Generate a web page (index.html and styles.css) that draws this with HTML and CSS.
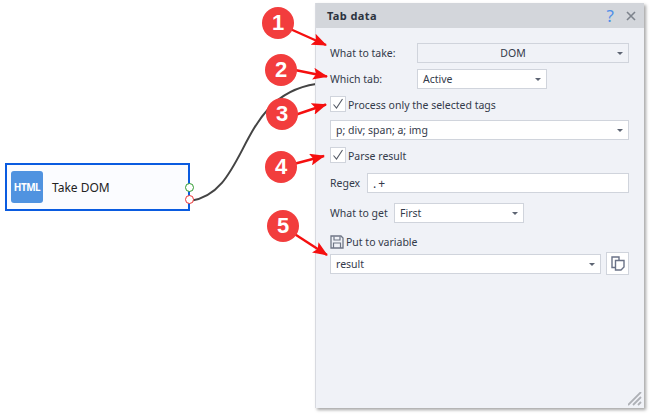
FILE: index.html
```html
<!DOCTYPE html>
<html lang="en">
<head>
<meta charset="utf-8">
<title>Tab data</title>
<link rel="stylesheet" href="styles.css">
</head>
<body>
<main class="canvas">
  <svg class="wire" width="652" height="416" viewBox="0 0 652 416" aria-hidden="true">
    <path d="M190 201C250 192 236 96 316 84" fill="none" stroke="#444" stroke-width="2"/>
  </svg>

  <div class="node">
    <span class="node-icon">HTML</span>
    <span class="node-label">Take DOM</span>
    <span class="port port-ok"></span>
    <span class="port port-err"></span>
  </div>

  <section class="panel">
    <header class="panel-head">
      <h1 class="panel-title">Tab data</h1>
      <span class="help">?</span>
      <svg class="close" width="10" height="10" viewBox="0 0 10 10" aria-hidden="true"><path d="M1 1l8 8M9 1l-8 8" stroke="#7d838c" stroke-width="1.6"/></svg>
    </header>
    <div class="panel-body">
      <div class="row row-take">
        <label class="lbl lbl-wide">What to take:</label>
        <div class="field field-disabled field-center grow"><span class="value">DOM</span><i class="caret"></i></div>
      </div>
      <div class="row row-tab">
        <label class="lbl lbl-wide">Which tab:</label>
        <div class="field w130"><span class="value">Active</span><i class="caret"></i></div>
      </div>
      <div class="row row-check1">
        <span class="check"><svg width="12" height="12" viewBox="0 0 12 12" aria-hidden="true"><path d="M1.5 6.5l3 3.5 6-9" fill="none" stroke="#555b66" stroke-width="1.1"/></svg></span>
        <span class="lbl lbl-check">Process only the selected tags</span>
      </div>
      <div class="row row-tags">
        <div class="field grow"><span class="value">p; div; span; a; img</span><i class="caret"></i></div>
      </div>
      <div class="row row-check2">
        <span class="check"><svg width="12" height="12" viewBox="0 0 12 12" aria-hidden="true"><path d="M1.5 6.5l3 3.5 6-9" fill="none" stroke="#555b66" stroke-width="1.1"/></svg></span>
        <span class="lbl lbl-check">Parse result</span>
      </div>
      <div class="row row-regex">
        <label class="lbl lbl-regex">Regex</label>
        <div class="field grow"><span class="value value-regex">.+</span></div>
      </div>
      <div class="row row-get">
        <label class="lbl lbl-get">What to get</label>
        <div class="field w130"><span class="value">First</span><i class="caret"></i></div>
      </div>
      <div class="row row-put">
        <svg class="save" width="14" height="14" viewBox="0 0 14 14" aria-hidden="true"><path d="M1 1h10l2 2v10H1z" fill="none" stroke="#6f7686" stroke-width="1.3"/><path d="M4 1.500v3.500h6V1.500M3.500 13V8h7v5" fill="none" stroke="#6f7686" stroke-width="1.2"/></svg>
        <span class="lbl">Put to variable</span>
      </div>
      <div class="row row-var">
        <div class="field grow"><span class="value">result</span><i class="caret"></i></div>
        <button class="copy" type="button" aria-label="Copy"><svg width="14" height="15" viewBox="0 0 14 15" aria-hidden="true"><path d="M4 11.500H1V1h7v3" fill="none" stroke="#6a7287" stroke-width="1.4"/><path d="M4.500 4.500h8.500v6.500l-3 3H4.500z" fill="#fff" stroke="#6a7287" stroke-width="1.400"/></svg></button>
      </div>
    </div>
    <svg class="grip" width="14" height="14" viewBox="0 0 14 14" aria-hidden="true"><path d="M0 13L13 0M5 13l8-8M10 13l3-3" stroke="#aeb1b6" stroke-width="1.800"/></svg>
  </section>

  <svg class="arrows" width="652" height="416" viewBox="0 0 652 416" aria-hidden="true">
    <defs>
      <marker id="head" markerUnits="userSpaceOnUse" markerWidth="15" markerHeight="12" refX="14" refY="6" orient="auto"><path d="M0 0L15 6L0 12L3 6z" fill="#f50f0f"/></marker>
    </defs>
    <g stroke="#f50f0f" stroke-width="2.400" marker-end="url(#head)">
      <line x1="288" y1="28" x2="326" y2="45"/>
      <line x1="295" y1="70" x2="327" y2="76.500"/>
      <line x1="295" y1="115" x2="326" y2="104.500"/>
      <line x1="290" y1="165" x2="324" y2="156"/>
      <line x1="293" y1="233" x2="327" y2="255"/>
    </g>
  </svg>

  <span class="badge b1">1</span>
  <span class="badge b2">2</span>
  <span class="badge b3">3</span>
  <span class="badge b4">4</span>
  <span class="badge b5">5</span>
</main>
</body>
</html>
```
FILE: styles.css
```css
* { box-sizing: border-box; }
html, body { margin: 0; padding: 0; background: #fff; }
.canvas {
  position: relative;
  width: 652px;
  height: 416px;
  overflow: hidden;
  font-family: "Noto Sans", "Open Sans", sans-serif;
  font-size: 10.500px;
  color: #333a4a;
}
.wire, .arrows { position: absolute; left: 0; top: 0; }
.arrows { pointer-events: none; }

.node {
  position: absolute;
  left: 5px;
  top: 163px;
  width: 185px;
  height: 48px;
  display: flex;
  align-items: center;
  gap: 9px;
  padding-left: 4px;
  background: #fbfcff;
  border: 2px solid #0a5be0;
}
.node-icon {
  width: 32px;
  height: 32px;
  display: flex;
  align-items: center;
  justify-content: center;
  background: #5093e0;
  border-radius: 3px;
  color: #fff;
  font: bold 10px "Noto Sans", sans-serif;
  letter-spacing: -.5px;
}
.node-label { font-size: 12px; color: #222; }
.port {
  position: absolute;
  right: -6px;
  width: 9px;
  height: 9px;
  border-radius: 50%;
  background: #fff;
  border: 1.500px solid;
}
.port-ok { top: 18px; border-color: #2f9a2f; }
.port-err { top: 30px; border-color: #ee3333; }

.panel {
  position: absolute;
  left: 315px;
  top: 3px;
  width: 329px;
  height: 405px;
  background: #f0f2f7;
  box-shadow: 2px 2px 3px rgba(0, 0, 0, .35);
  border-left: 1px solid #d8dae0;
  display: flex;
  flex-direction: column;
}
.panel-head {
  height: 25px;
  flex: none;
  display: flex;
  align-items: center;
  padding: 0 8px 0 11px;
  background: #d3d6db;
}
.panel-title {
  margin: 0;
  flex: 1;
  font-size: 11px;
  font-weight: 700;
  letter-spacing: .4px;
  color: #2c3340;
}
.help { font-size: 17px; color: #4f8fe8; margin-right: 12px; }
.panel-body { padding: 15px 15px 0 14px; display: flex; flex-direction: column; }
.row { display: flex; align-items: center; }
.row-take, .row-tab, .row-tags, .row-regex, .row-get { height: 20px; }
.row-tab { margin-top: 6px; }
.row-check1 { height: 16px; margin-top: 7px; gap: 2px; }
.row-tags { margin-top: 8px; }
.row-check2 { height: 16px; margin-top: 7px; gap: 2px; }
.row-regex { margin-top: 10px; }
.row-get { margin-top: 10px; }
.row-put { height: 17px; margin-top: 10px; gap: 2px; }
.row-var { height: 23px; margin-top: 2px; gap: 5px; }

.lbl { white-space: nowrap; line-height: 18px; }
.lbl-check { padding-top: 2px; }
.lbl-wide { width: 87px; flex: none; }
.lbl-regex { width: 37px; flex: none; }
.lbl-get { width: 64px; flex: none; }

.field {
  position: relative;
  height: 20px;
  display: flex;
  align-items: center;
  padding: 0 5px;
  background: #fff;
  border: 1px solid #d0d4dc;
}
.grow { flex: 1; }
.w130 { width: 130px; }
.field-disabled { background: #f0f2f7; }
.field-center { justify-content: center; padding-right: 25px; }
.value { color: #333a4a; }
.value-regex { letter-spacing: 2px; font-size: 12px; }
.caret {
  position: absolute;
  right: 5px;
  top: 8px;
  width: 0;
  height: 0;
  border-left: 3px solid transparent;
  border-right: 3px solid transparent;
  border-top: 3px solid #5d6473;
}
.check {
  width: 16px;
  height: 16px;
  flex: none;
  display: flex;
  align-items: center;
  justify-content: center;
  background: #fff;
  border: 1px solid #d0d4dc;
}
.save { flex: none; }
.copy {
  width: 23px;
  height: 23px;
  flex: none;
  padding: 0;
  display: flex;
  align-items: center;
  justify-content: center;
  background: #fff;
  border: 1px solid #d0d4dc;
}
.grip { position: absolute; right: 2px; bottom: 2px; }

.badge {
  position: absolute;
  width: 32px;
  height: 32px;
  display: flex;
  align-items: center;
  justify-content: center;
  border-radius: 50%;
  background: #f23d3d;
  color: #fff;
  font: bold 22px "Liberation Sans", sans-serif;
}
.b1 { left: 262px; top: 7px; }
.b2 { left: 265px; top: 54px; }
.b3 { left: 266px; top: 98px; }
.b4 { left: 265px; top: 151px; }
.b5 { left: 267px; top: 210px; }
```
